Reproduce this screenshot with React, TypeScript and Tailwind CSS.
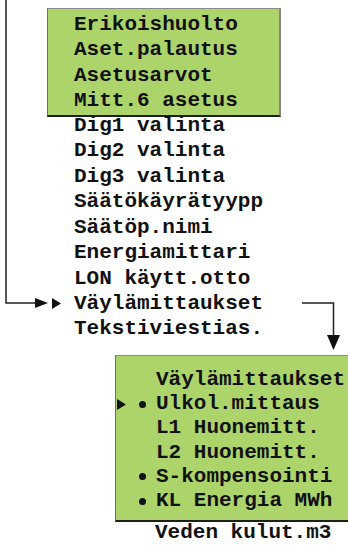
import React from "react";

const mainRows = [
  "Dig1 valinta",
  "Dig2 valinta",
  "Dig3 valinta",
  "Säätökäyrätyypp",
  "Säätöp.nimi",
  "Energiamittari",
  "LON käytt.otto",
];

const boxRows: { t: string; dot?: boolean; cur?: boolean }[] = [
  { t: "Väylämittaukset" },
  { t: "Ulkol.mittaus", dot: true, cur: true },
  { t: "L1 Huonemitt." },
  { t: "L2 Huonemitt." },
  { t: "S-kompensointi", dot: true },
  { t: "KL Energia MWh", dot: true },
];

function Cursor() {
  return (
    <svg width="9" height="11" viewBox="0 0 9 11" className="block">
      <polygon points="0,0 9,5.5 0,11" fill="#111" />
    </svg>
  );
}

export default function App() {
  return (
    <div
      className="relative w-[348px] h-[545px] bg-white overflow-hidden text-[#111] font-bold text-[21px]"
      style={{ fontFamily: '"Liberation Mono", monospace' }}
    >
      {/* connector drawings */}
      <svg
        className="absolute left-0 top-0 pointer-events-none"
        width="348"
        height="545"
        viewBox="0 0 348 545"
      >
        <path d="M6 0 V303 H38" fill="none" stroke="#222" strokeWidth="1.5" />
        <polygon points="35,298 48,303 35,308" fill="#111" />
        <path d="M302 303 H333.5 V337" fill="none" stroke="#222" strokeWidth="1.5" />
        <polygon points="327,335 340,335 333.5,350" fill="#111" />
      </svg>

      <div className="pt-[8px] leading-[25.45px]">
        <div className="ml-[47px] w-[234px] mb-[-4px] bg-[#add46b] border-t border-l border-t-[#8a8a8a] border-l-[#6f6f6f] border-r-2 border-r-[#858585] border-b-2 border-b-[#1e1e1e] pl-[26px] pt-[3px] pb-[1px]">
          <div>Erikoishuolto</div>
          <div>Aset.palautus</div>
          <div>Asetusarvot</div>
          <div>Mitt.6 asetus</div>
        </div>
        {mainRows.map((r) => (
          <div key={r} className="pl-[74px] whitespace-pre">
            {r}
          </div>
        ))}
        <div className="flex items-center">
          <div className="w-[74px] flex justify-start pl-[52px]">
            <Cursor />
          </div>
          <div className="whitespace-pre">Väylämittaukset</div>
        </div>
        <div className="pl-[74px] whitespace-pre">Tekstiviestias.</div>
      </div>

      <div className="mt-[13px] ml-[115px] w-[260px] bg-[#add46b] border-t border-l border-t-[#8a8a8a] border-l-[#6f6f6f] border-b-2 border-b-[#1e1e1e] pt-[12px] pb-[7px] leading-[24.2px]">
        {boxRows.map((r) => (
          <div key={r.t} className="flex items-center">
            <div className="w-[40px] flex items-center">
              <div className="w-[23px] pl-[1px]">{r.cur ? <Cursor /> : null}</div>
              <div className="w-[17px]">
                {r.dot ? <div className="w-[7px] h-[7px] rounded-full bg-[#111]" /> : null}
              </div>
            </div>
            <div className="whitespace-pre">{r.t}</div>
          </div>
        ))}
      </div>
      <div className="pl-[155px] leading-[21px] whitespace-pre">Veden kulut.m3</div>
    </div>
  );
}
